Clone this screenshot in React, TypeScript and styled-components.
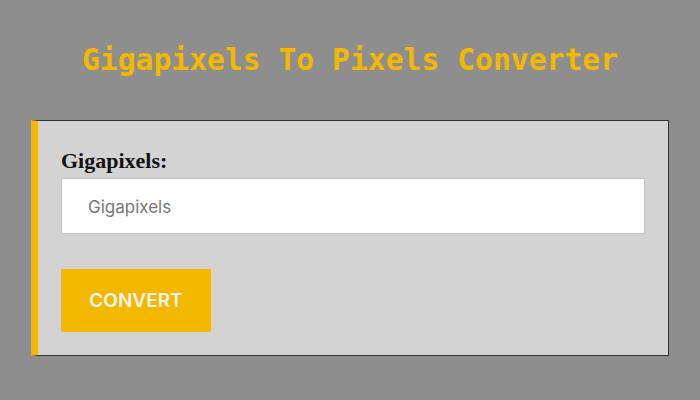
import React from 'react'
import styled, { createGlobalStyle } from 'styled-components';

const GlobalStyle = createGlobalStyle`
  html, body {
    margin: 0;
    padding: 0;
    background: #8e8e8e;
  }
  * {
    box-sizing: border-box;
  }
`;

const Page = styled.div`
  width: 700px;
  height: 400px;
  display: flex;
  flex-direction: column;
  align-items: stretch;
`;

const Title = styled.h1`
  margin: 42px 0 0 0;
  height: 36px;
  line-height: 36px;
  text-align: center;
  font-family: "DejaVu Sans Mono", monospace;
  font-weight: bold;
  font-size: 29.7px;
  color: #f5b800;
`;

const Card = styled.div`
  margin: 42px 31px 0 31px;
  background: #d3d3d3;
  border: 1px solid #333;
  border-left: 7px solid #f5b800;
  padding: 27px 23px 23px 23px;
  display: flex;
  flex-direction: column;
  align-items: flex-start;
`;

const Label = styled.label`
  font-family: "Liberation Serif", "Times New Roman", serif;
  font-weight: bold;
  font-size: 22px;
  line-height: 25px;
  color: #111;
  margin-bottom: 5px;
`;

const Input = styled.input`
  width: 100%;
  height: 56px;
  border: 1px solid #c4c4c4;
  background: #fff;
  padding: 1px 0 0 26px;
  font-family: Inter, "Noto Sans", sans-serif;
  font-size: 17px;
  color: #333;
  outline: none;
  &::placeholder {
    color: #777;
  }
`;

const Button = styled.button`
  margin-top: 35px;
  width: 150px;
  height: 63px;
  border: none;
  border-radius: 2px;
  background: #f5b800;
  color: #f3f3f3;
  font-family: Inter, "Noto Sans", sans-serif;
  font-weight: 600;
  font-size: 19px;
  cursor: pointer;
`;

export default function App() {
  return (
    <Page>
      <GlobalStyle />
      <Title>Gigapixels To Pixels Converter</Title>
      <Card>
        <Label htmlFor="gp">Gigapixels:</Label>
        <Input id="gp" placeholder="Gigapixels" />
        <Button>CONVERT</Button>
      </Card>
    </Page>
  );
}
